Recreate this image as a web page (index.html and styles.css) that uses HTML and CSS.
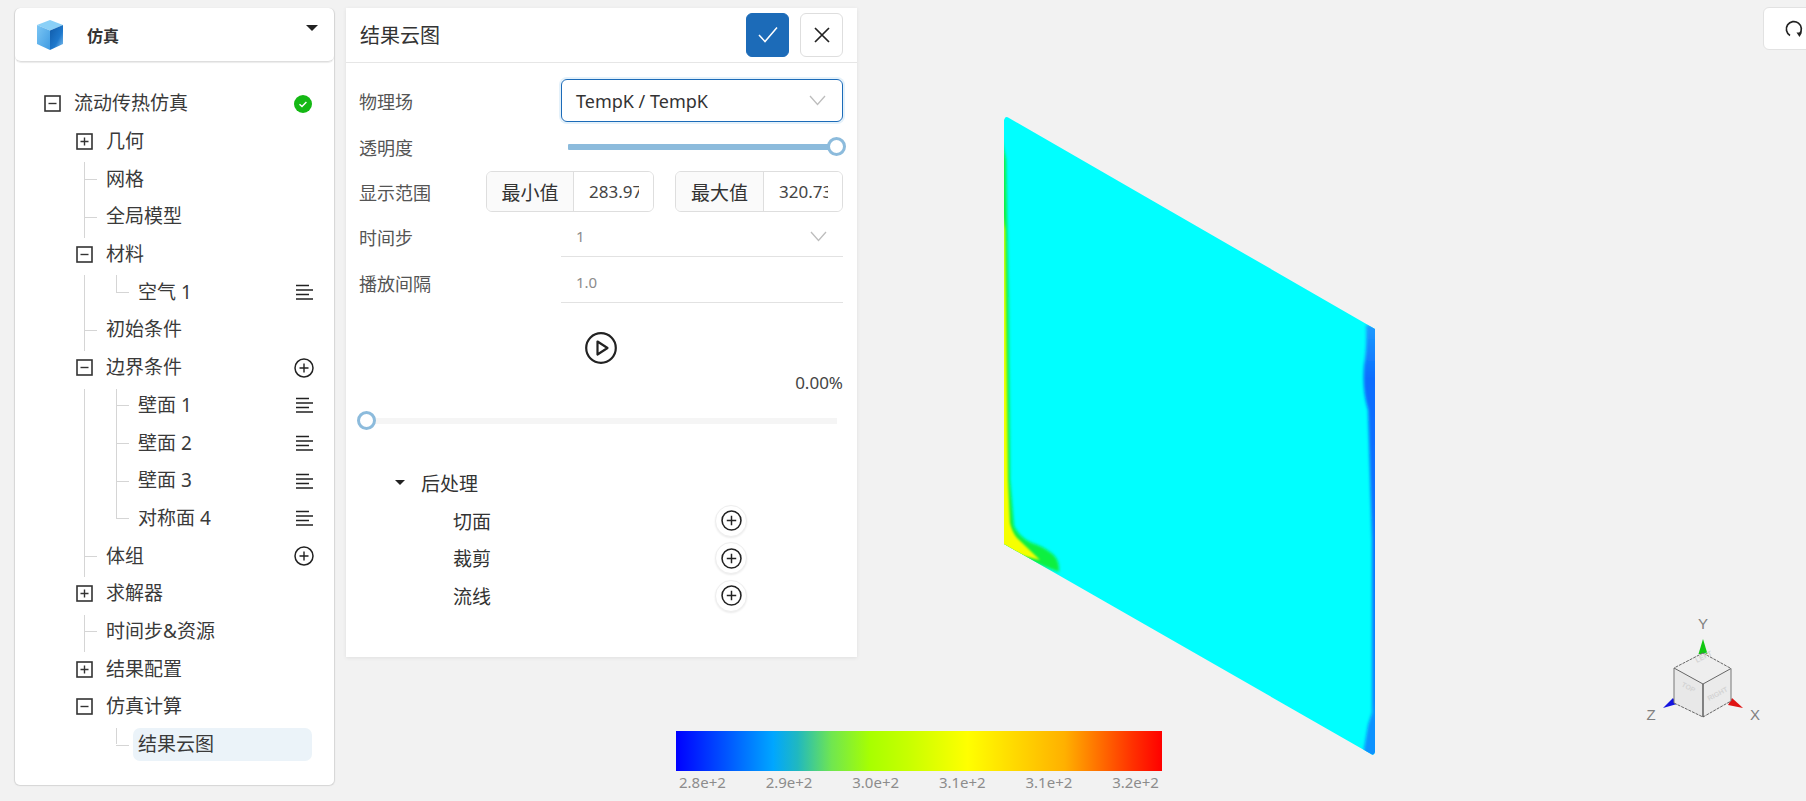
FILE: index.html
```html
<!DOCTYPE html>
<html lang="zh">
<head>
<meta charset="utf-8">
<title>结果云图</title>
<link rel="stylesheet" href="styles.css">
</head>
<body>
<svg class="defs" width="0" height="0">
  <symbol id="i-minus" viewBox="0 0 17 17"><rect x="1" y="1" width="15" height="15" fill="none" stroke="#333" stroke-width="1.6"/><path d="M4.5 8.5h8" stroke="#333" stroke-width="1.4"/></symbol>
  <symbol id="i-plus" viewBox="0 0 17 17"><rect x="1" y="1" width="15" height="15" fill="none" stroke="#333" stroke-width="1.6"/><path d="M4.5 8.5h8M8.5 4.5v8" stroke="#333" stroke-width="1.4"/></symbol>
  <symbol id="i-list" viewBox="0 0 18 16"><path d="M1 1.5h13M1 6h17M1 10.5h13M1 15h17" stroke="#222" stroke-width="1.3" fill="none"/></symbol>
  <symbol id="i-add" viewBox="0 0 20 20"><circle cx="10" cy="10" r="9" fill="none" stroke="#222" stroke-width="1.5"/><path d="M10 5.5v9M5.5 10h9" stroke="#222" stroke-width="1.4"/></symbol>
  <symbol id="i-chev" viewBox="0 0 17 11"><path d="M1 1l7.5 8.5L16 1" fill="none" stroke="#bdbdbd" stroke-width="1.3"/></symbol>
</svg>

<div class="page">
  <aside class="side">
    <header class="side-head">
      <svg class="logo" viewBox="0 0 28 30" width="28" height="30">
        <defs>
          <linearGradient id="lg-l" x1="0" y1="0" x2="1" y2="1"><stop offset="0" stop-color="#7cc6f4"/><stop offset="1" stop-color="#3f9be2"/></linearGradient>
          <linearGradient id="lg-r" x1="0" y1="0" x2="1" y2="1"><stop offset="0" stop-color="#0f5aa8"/><stop offset=".6" stop-color="#1e78cc"/><stop offset="1" stop-color="#8cc8f0"/></linearGradient>
        </defs>
        <path d="M14 0L27 5 14 10.500 1 5z" fill="#8ad0f7"/>
        <path d="M1 5l13 5.500V30L1 24z" fill="url(#lg-l)"/>
        <path d="M27 5L14 10.500V30l13-6z" fill="url(#lg-r)"/>
      </svg>
      <span class="side-title">仿真</span>
      <span class="caret"></span>
    </header>
    <nav class="tree">
      <div class="row"><svg class="tg"><use href="#i-minus"/></svg><span class="lb">流动传热仿真</span>
        <svg class="ok" viewBox="0 0 18 18" width="18" height="18"><circle cx="9" cy="9" r="9" fill="#14b814"/><path d="M5.5 9.2l2.5 2.4 4.4-4.6" fill="none" stroke="#fff" stroke-width="1.4"/></svg></div>
      <div class="row l1"><svg class="tg"><use href="#i-plus"/></svg><span class="lb">几何</span></div>
      <div class="kids">
        <div class="row l1 leaf"><span class="lb">网格</span></div>
        <div class="row l1 leaf"><span class="lb">全局模型</span></div>
      </div>
      <div class="row l1"><svg class="tg"><use href="#i-minus"/></svg><span class="lb">材料</span></div>
      <div class="kids">
        <div class="kids2">
          <div class="row l2 leaf"><span class="lb">空气 1</span><svg class="ic-list"><use href="#i-list"/></svg></div>
        </div>
        <div class="row l1 leaf"><span class="lb">初始条件</span></div>
      </div>
      <div class="row l1"><svg class="tg"><use href="#i-minus"/></svg><span class="lb">边界条件</span><svg class="ic-add"><use href="#i-add"/></svg></div>
      <div class="kids">
        <div class="kids2">
          <div class="row l2 leaf"><span class="lb">壁面 1</span><svg class="ic-list"><use href="#i-list"/></svg></div>
          <div class="row l2 leaf"><span class="lb">壁面 2</span><svg class="ic-list"><use href="#i-list"/></svg></div>
          <div class="row l2 leaf"><span class="lb">壁面 3</span><svg class="ic-list"><use href="#i-list"/></svg></div>
          <div class="row l2 leaf"><span class="lb">对称面 4</span><svg class="ic-list"><use href="#i-list"/></svg></div>
        </div>
        <div class="row l1 leaf"><span class="lb">体组</span><svg class="ic-add"><use href="#i-add"/></svg></div>
      </div>
      <div class="row l1"><svg class="tg"><use href="#i-plus"/></svg><span class="lb">求解器</span></div>
      <div class="kids">
        <div class="row l1 leaf"><span class="lb">时间步&amp;资源</span></div>
      </div>
      <div class="row l1"><svg class="tg"><use href="#i-plus"/></svg><span class="lb">结果配置</span></div>
      <div class="row l1"><svg class="tg"><use href="#i-minus"/></svg><span class="lb">仿真计算</span></div>
      <div class="kids2">
        <div class="row l2 leaf"><span class="lb sel">结果云图</span></div>
      </div>
    </nav>
  </aside>

  <section class="panel">
    <header class="panel-head">
      <h1 class="panel-title">结果云图</h1>
      <button class="btn btn-primary"><svg viewBox="0 0 20 17" width="20" height="17"><path d="M1 9l6 6.5L19 1.5" fill="none" stroke="#fff" stroke-width="1.5"/></svg></button>
      <button class="btn btn-plain"><svg viewBox="0 0 16 16" width="16" height="16"><path d="M1 1l14 14M15 1L1 15" fill="none" stroke="#222" stroke-width="1.7"/></svg></button>
    </header>
    <div class="form">
      <div class="f-row f-select">
        <span class="f-label">物理场</span>
        <div class="select"><span>TempK / TempK</span><svg class="chev"><use href="#i-chev"/></svg></div>
      </div>
      <div class="f-row f-slider">
        <span class="f-label">透明度</span>
        <div class="slider"><span class="knob"></span></div>
      </div>
      <div class="f-row f-range">
        <span class="f-label">显示范围</span>
        <div class="igroup"><span class="addon a1">最小值</span><input class="ival" value="283.9712" readonly></div>
        <div class="igroup"><span class="addon a2">最大值</span><input class="ival" value="320.7345" readonly></div>
      </div>
      <div class="f-row f-step">
        <span class="f-label">时间步</span>
        <div class="under"><span>1</span><svg class="chev"><use href="#i-chev"/></svg></div>
      </div>
      <div class="f-row">
        <span class="f-label">播放间隔</span>
        <div class="under"><span>1.0</span></div>
      </div>
    </div>
    <div class="play-wrap">
      <svg viewBox="0 0 32 32" width="32" height="32"><circle cx="16" cy="16" r="14.8" fill="none" stroke="#222" stroke-width="2.2"/><path d="M12.5 9.5L22.5 16l-10 6.5z" fill="none" stroke="#222" stroke-width="2.2" stroke-linejoin="round"/></svg>
    </div>
    <div class="percent">0.00%</div>
    <div class="progress"><span class="knob knob-start"></span></div>
    <div class="post">
      <div class="post-head"><span class="post-caret"></span><span>后处理</span></div>
      <div class="post-row"><span class="post-name">切面</span><span class="post-add"><svg><use href="#i-add"/></svg></span></div>
      <div class="post-row"><span class="post-name">裁剪</span><span class="post-add"><svg><use href="#i-add"/></svg></span></div>
      <div class="post-row"><span class="post-name">流线</span><span class="post-add"><svg><use href="#i-add"/></svg></span></div>
    </div>
  </section>

  <main class="view">
    <svg class="plate" viewBox="0 0 400 680" width="400" height="680">
      <defs>
        <clipPath id="pc"><path d="M15 18Q16 16 19 18L385 229V652Q384 656 381 654L14 444V20z"/></clipPath>
        <filter id="b2" x="-30%" y="-10%" width="160%" height="120%"><feGaussianBlur stdDeviation="1.8"/></filter>
        <filter id="b1" x="-30%" y="-10%" width="160%" height="120%"><feGaussianBlur stdDeviation="0.9"/></filter>
        <linearGradient id="band" x1="0" y1="0" x2="0" y2="1">
          <stop offset="0" stop-color="#1f9cff"/><stop offset=".12" stop-color="#0a6cff"/><stop offset=".5" stop-color="#0a72ff"/><stop offset="1" stop-color="#1290ff"/>
        </linearGradient>
      </defs>
      <g clip-path="url(#pc)">
        <rect width="400" height="680" fill="#00ffff"/>
        <g filter="url(#b2)">
          <path d="M10 30L16 60 18.500 200 20 380 24 426Q30 438 42 443 52 446 60 452 70 458 69 472L10 450z" fill="#10f040"/>
        </g>
        <g filter="url(#b1)">
          <path d="M10 100L15 130 17 300 18 380 20 423Q22 432 27 438L50 460 10 450z" fill="#f6ff00"/>
        </g>
        <g filter="url(#b2)">
          <path d="M376 225H392V680H378L382 620 382 440 378 310Q372 290 374 265 377 250 376 225z" fill="url(#band)"/>
          <path d="M372 660L378 625 386 600V670z" fill="#0a92ff"/>
        </g>
      </g>
    </svg>

    <div class="legend">
      <div class="legend-bar"></div>
      <div class="legend-labels"><span>2.8e+2</span><span>2.9e+2</span><span>3.0e+2</span><span>3.1e+2</span><span>3.1e+2</span><span>3.2e+2</span></div>
    </div>

    <svg class="gizmo" viewBox="0 0 120 120" width="120" height="120">
      <path d="M58 25L62.500 40H53.500z" fill="#12c812"/>
      <path d="M18 94L28 84 32 90z" fill="#1414e0"/>
      <path d="M98 94L87 84 83 91z" fill="#e01414"/>
      <path d="M58 39L86 54.500 58 70 29 54z" fill="#eeeeee"/>
      <path d="M29 54L58 70V103L29 89z" fill="#e8e8e8"/>
      <path d="M86 54.500L58 70V103L86 87z" fill="#ebebeb"/>
      <path d="M58 39L86 54.500M58 39L29 54M29 89L58 103 86 87" fill="none" stroke="#666" stroke-width="1" stroke-dasharray="3 1"/>
      <path d="M29 54V89M86 54.500V87" fill="none" stroke="#777" stroke-width="1"/>
      <path d="M29 54L58 70 86 54.500" fill="none" stroke="#666" stroke-width="1"/>
      <path d="M58 70V103" fill="none" stroke="#555" stroke-width="1.400"/>
      <text class="gz-face" transform="translate(52 49) rotate(-28)">LEFT</text>
      <text class="gz-face" transform="translate(36 72) rotate(28)">TOP</text>
      <text class="gz-face" transform="translate(64 87) rotate(-28)">RIGHT</text>
      <text class="gz-label" x="58" y="15">Y</text>
      <text class="gz-label" x="6" y="106">Z</text>
      <text class="gz-label" x="110" y="106">X</text>
    </svg>

    <button class="reset"><svg viewBox="0 0 20 20" width="20" height="20"><path d="M6 16.500A7.500 7.500 0 1 1 15.500 15" fill="none" stroke="#222" stroke-width="1.7"/><path d="M12.500 13.500h5.500L15.500 18z" fill="#222"/></svg></button>
  </main>
</div>
</body>
</html>
```

FILE: styles.css
```css
* { box-sizing: border-box; }
html, body { margin: 0; height: 100%; overflow: hidden; }
body {
  background: #f2f2f2;
  color: #333;
  font-family: "Noto Sans", "Noto Sans CJK SC", sans-serif;
  font-size: 18px;
}
.defs { position: absolute; }
.page { display: flex; align-items: flex-start; height: 801px; padding: 8px 0 0 14px; }

/* left tree */
.side {
  width: 321px;
  height: 778px;
  flex: none;
  background: #fff;
  border: 1px solid #d8d8d8;
  border-top: 0;
  border-radius: 6px;
  box-shadow: 0 0 2px rgba(0,0,0,.06);
}
.side-head {
  height: 54px;
  display: flex;
  align-items: center;
  padding-left: 21px;
  border-bottom: 1px solid #dedede;
  border-radius: 6px;
  box-shadow: 0 1px 1px rgba(0,0,0,.08);
  position: relative;
}
.logo { flex: none; }
.side-title { margin-left: 23px; font-size: 16px; font-weight: 700; color: #333; }
.caret {
  position: absolute;
  right: 16px;
  top: 17px;
  border-left: 6px solid transparent;
  border-right: 6px solid transparent;
  border-top: 6px solid #222;
}
.tree { padding: 23px 21px 0 29px; }
.row { position: relative; display: flex; align-items: center; height: 37.7px; }
.l1 { margin-left: 32px; }
.l2 { margin-left: 65px; }
.tg { width: 17px; height: 17px; flex: none; margin-right: 13px; }
.lb { flex: 1; font-size: 19px; line-height: 33px; color: #3a3a3a; white-space: nowrap; }
.leaf .lb { margin-left: 30px; }
.leaf.l2 .lb { margin-left: 29px; }
.leaf.l2 .lb.sel {
  margin-left: 24px;
  margin-right: 1px;
  padding-left: 5px;
  height: 33px;
  background: #ebf3f9;
  border-radius: 7px;
}
.ok { flex: none; margin-right: 1px; }
.ic-list { width: 18px; height: 16px; flex: none; }
.ic-add { width: 20px; height: 20px; flex: none; margin-right: -1px; }
.kids { position: relative; }
.kids::before {
  content: "";
  position: absolute;
  left: 40px;
  top: 2px;
  bottom: -2px;
  width: 1px;
  background: #d5d5d5;
}
.kids2 { position: relative; }
.kids2::before {
  content: "";
  position: absolute;
  left: 72px;
  top: 2px;
  bottom: 19px;
  width: 1px;
  background: #d5d5d5;
}
.leaf::after {
  content: "";
  position: absolute;
  top: 50%;
  width: 13px;
  height: 1px;
  background: #d5d5d5;
}
.l1.leaf::after { left: 8px; }
.l2.leaf::after { left: 7px; }

/* middle panel */
.panel {
  width: 511px;
  height: 649px;
  flex: none;
  margin-left: 11px;
  background: #fff;
  box-shadow: 0 1px 4px rgba(0,0,0,.08);
}
.panel-head {
  height: 55px;
  display: flex;
  align-items: center;
  padding: 0 14px 1px 14px;
  border-bottom: 1px solid #e6e6e6;
}
.panel-title { flex: 1; margin: 0; font-size: 20px; font-weight: 400; color: #333; }
.btn {
  width: 43px;
  height: 44px;
  margin-left: 11px;
  padding: 0;
  border-radius: 6px;
  display: flex;
  align-items: center;
  justify-content: center;
}
.btn-primary { background: #1c6bb8; border: 1px solid #1c6bb8; }
.btn-plain { background: #fff; border: 1px solid #dedede; }

.form { padding: 16px 14px 0 13px; }
.f-row { display: flex; align-items: center; height: 41px; margin-bottom: 5px; }
.f-row:last-child { margin-bottom: 0; }
.f-select { height: 43px; margin-bottom: 4px; }
.f-slider { height: 42px; margin-bottom: 3px; }
.f-range { margin-bottom: 4px; }
.f-label { flex: 1; font-size: 18px; color: #555; white-space: nowrap; }
.select {
  width: 282px;
  height: 43px;
  display: flex;
  align-items: center;
  justify-content: space-between;
  padding: 0 16px 0 14px;
  border: 1px solid #1c6bb8;
  border-radius: 6px;
  box-shadow: 0 0 0 2px #e4f1fa;
  color: #333;
  font-size: 18px;
}
.chev { width: 17px; height: 11px; flex: none; }
.slider {
  position: relative;
  width: 269px;
  height: 6px;
  margin-right: 6px;
  background: #8cbbdc;
  border-radius: 1px;
}
.knob {
  position: absolute;
  right: -9px;
  top: -7px;
  width: 19px;
  height: 19px;
  border-radius: 50%;
  background: #fff;
  border: 3px solid #8cbbdc;
}
.igroup {
  width: 168px;
  height: 41px;
  display: flex;
  border: 1px solid #dedede;
  border-radius: 6px;
  overflow: hidden;
}
.igroup + .igroup { margin-left: 21px; }
.addon {
  flex: none;
  display: flex;
  align-items: center;
  justify-content: center;
  background: #fafafa;
  border-right: 1px solid #dedede;
  font-size: 19px;
  color: #333;
}
.a1 { width: 87px; }
.a2 { width: 88px; }
.ival {
  flex: 1;
  min-width: 0;
  width: 10px;
  border: 0;
  outline: 0;
  padding: 0 14px 0 15px;
  background: #fff;
  color: #444;
  font-family: inherit;
  font-size: 17px;
}
.under {
  width: 282px;
  height: 41px;
  display: flex;
  align-items: center;
  justify-content: space-between;
  padding: 0 16px 0 15px;
  border-bottom: 1px solid #e2e2e2;
  color: #8c8c8c;
  font-size: 15px;
}
.play-wrap { display: flex; justify-content: center; margin-top: 29px; padding-right: 1px; height: 32px; }
.percent { margin-top: 7px; padding-right: 14px; text-align: right; font-size: 17px; color: #444; line-height: 24px; }
.progress {
  position: relative;
  margin: 23px 20px 0 20px;
  height: 6px;
  background: #f5f5f5;
}
.knob-start { left: -9px; right: auto; }
.post { padding: 40px 0 0 49px; }
.post-head { display: flex; align-items: center; height: 37.700px; font-size: 19px; color: #333; }
.post-caret {
  width: 0;
  height: 0;
  margin-right: 16px;
  border-left: 5px solid transparent;
  border-right: 5px solid transparent;
  border-top: 5px solid #222;
}
.post-row { display: flex; align-items: center; height: 37.700px; padding-left: 58px; }
.post-name { width: 262px; font-size: 19px; color: #333; }
.post-add {
  width: 32px;
  height: 32px;
  border-radius: 50%;
  background: #fff;
  border: 1px solid #eee;
  box-shadow: 0 1px 2px rgba(0,0,0,.08);
  display: flex;
  align-items: center;
  justify-content: center;
}
.post-add svg { width: 21px; height: 21px; }

/* viewport */
.view { position: absolute; inset: 0; pointer-events: none; }
.plate { position: absolute; left: 990px; top: 100px; }
.legend { position: absolute; left: 676px; top: 731px; width: 486px; }
.legend-bar {
  height: 40px;
  background: linear-gradient(90deg, #0000ff 0%, #0052ff 10%, #00a6ff 20%, #20b8c0 25%, #70e650 32%, #a8ff00 40%, #c8ff00 48%, #ffff00 60%, #ffd000 72%, #ffb000 80%, #ff7000 87%, #ff3000 94%, #ff0000 100%);
}
.legend-labels {
  display: flex;
  justify-content: space-between;
  padding: 0 3px;
  font-size: 15px;
  line-height: 22px;
  color: #8c8c8c;
}
.gizmo { position: absolute; left: 1645px; top: 614px; }
.gz-face { font-size: 7px; font-weight: 700; fill: #d4d4d4; font-family: "Liberation Sans", sans-serif; }
.gz-label { font-size: 15px; fill: #808080; text-anchor: middle; font-family: "Liberation Sans", sans-serif; }
.reset {
  position: absolute;
  left: 1763px;
  top: 7px;
  width: 60px;
  height: 43px;
  padding: 0 0 0 20px;
  background: #fff;
  border: 1px solid #e2e2e2;
  border-radius: 6px;
  display: flex;
  align-items: center;
}
```
